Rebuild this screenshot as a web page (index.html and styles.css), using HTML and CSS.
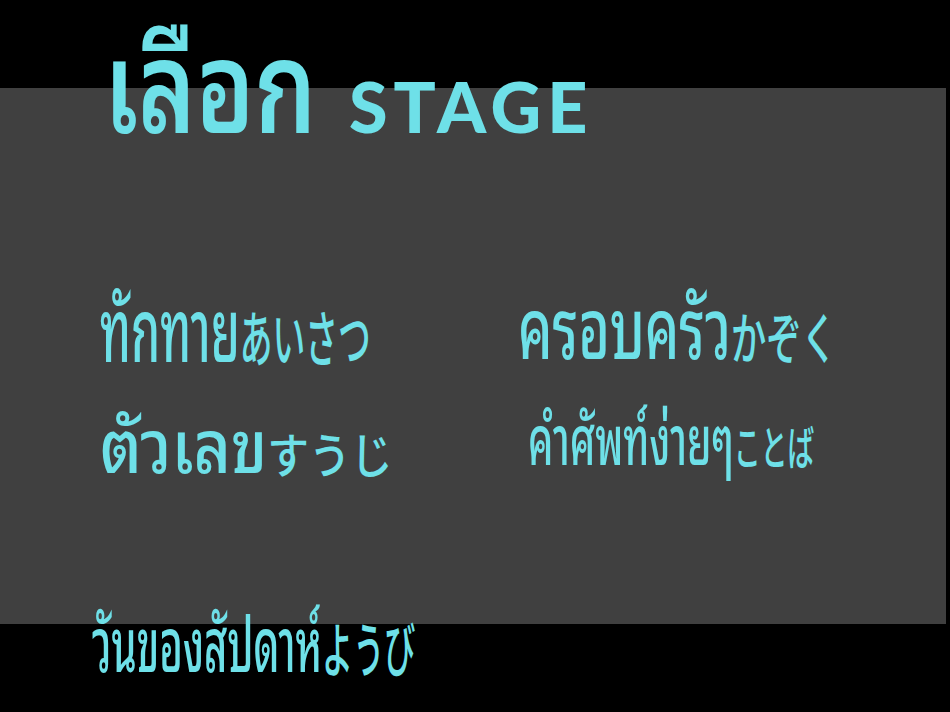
FILE: index.html
```html
<!DOCTYPE html>
<html lang="th">
<head>
<meta charset="utf-8">
<title>เลือก STAGE</title>
<link rel="stylesheet" href="styles.css">
</head>
<body>
<main class="screen">
  <h1 class="title"><span class="title-th">เลือก</span><span class="title-en">STAGE</span></h1>
  <ul class="menu">
    <li class="item greet"><span class="lbl">ทักทาย<span class="jp">あいさつ</span></span></li>
    <li class="item family"><span class="lbl">ครอบครัว<span class="jp">かぞく</span></span></li>
    <li class="item number"><span class="lbl">ตัวเลข<span class="jp">すうじ</span></span></li>
    <li class="item words"><span class="lbl">คำศัพท์ง่ายๆ<span class="jp">ことば</span></span></li>
    <li class="item days"><span class="lbl">วันของสัปดาห์<span class="jp">ようび</span></span></li>
  </ul>
</main>
</body>
</html>
```
FILE: styles.css
```css
html, body { margin: 0; padding: 0; }
body {
  width: 950px;
  height: 712px;
  overflow: hidden;
  background-color: #000;
  background-image: linear-gradient(#000 0, #000 88px, #404040 88px, #404040 624px, #000 624px);
  background-size: 946px 100%;
  background-repeat: no-repeat;
  color: #6ee0e8;
  font-family: "Noto Sans Thai Looped", "Noto Sans Thai", "Noto Sans", "Noto Sans CJK JP", sans-serif;
}
.screen { display: flex; flex-direction: column; }
.title {
  margin: 0;
  padding: 12px 0 0 104px;
  height: 128px;
  display: flex;
  align-items: baseline;
  line-height: 1;
  font-weight: 600;
}
.title-th {
  display: inline-block;
  flex: none;
  width: 245px;
  min-width: 0;
  font-size: 128px;
  transform: scaleX(0.76);
  transform-origin: left center;
}
.title-en {
  font-family: "Lato", sans-serif;
  font-size: 70px;
  font-weight: 900;
  letter-spacing: 6px;
}
.menu {
  list-style: none;
  margin: 0;
  padding: 139px 0 0 100px;
  display: grid;
  grid-template-columns: 418px minmax(0, 1fr);
  grid-template-rows: 121px 200px auto;
  line-height: 1;
  font-weight: 500;
}
.item { white-space: nowrap; min-width: 0; }
.lbl { display: inline-block; transform-origin: left top; }
.jp { font-family: "Noto Sans CJK JP", sans-serif; font-weight: 500; }
.greet .lbl { font-size: 87px; transform: scaleX(0.537); }
.greet .jp { font-size: 0.7em; }
.family .lbl { font-size: 84px; transform: scaleX(0.636); }
.family .jp { font-size: 0.66em; }
.number { padding-top: 4px; }
.number .lbl { font-size: 73px; transform: scaleX(0.88); }
.number .jp { font-size: 0.65em; }
.words { padding-left: 10px; }
.words .lbl { font-size: 69px; transform: scaleX(0.57); }
.words .jp { font-size: 0.68em; }
.days { margin-left: -8px; grid-column: 1 / 3; }
.days .lbl { font-size: 76px; transform: scaleX(0.525); }
.days .jp { font-size: 0.78em; }
```
